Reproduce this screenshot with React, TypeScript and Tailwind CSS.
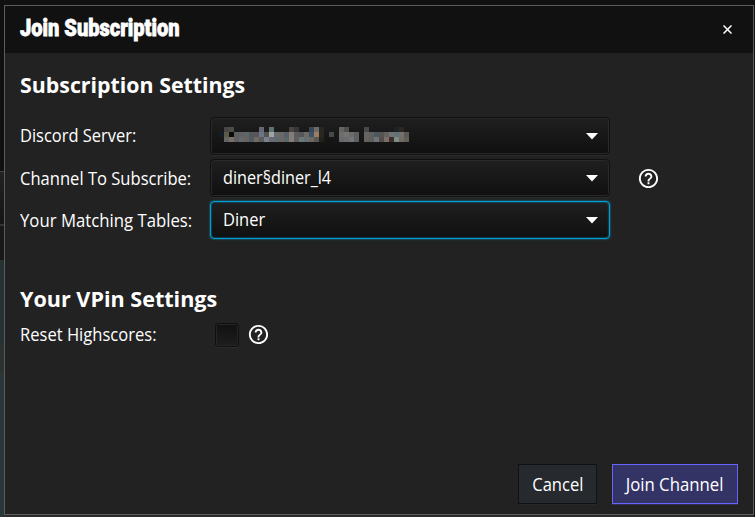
import React from "react";

const TOP = "- 464644 4e4c46 - - - - - 666a78 - 5e7270 - - - 484442 363638 - - 3c4654 6c6c6e 2a281e - - - 646464 54504e - - - 484848 - - - - - 1e2224 2c2624 -";
const MIDDLE = "161c2a 5e5a48 0a0a0a 5c5e60 626264 5e6668 54585a 5a5654 6c748c 56524c 9ea6a4 686c70 6c6864 56606a 827c7a 5c5a5a 545658 6e6a66 3c5468 9c7c62 2a281e - 464846 - 6e6e6e 747472 6a6c6a 5e5e5e - 686462 60605e 48585c 545252 64605e 727274 5e7476 74706c 5c5856";
const BOTTOM = "- 606464 7a6e66 5e5e60 64686a 66625e 505a62 706a64 5c5c5e 7a808e 6c6a72 5e6c72 6a6866 5c6668 847e7a 5e5e5c 6c7878 667072 6c6862 5a5652 24221a - - - 686a6a 6a6c74 767274 5a6060 - 666260 5e5e60 6c7476 544c4c 78706a 422e28 7e8c88 746a62 625e5a";
const cells = [TOP, MIDDLE, BOTTOM].join(" ").split(" ");

function Redacted() {
  return (
    <div className="-mt-1 -ml-1 grid w-[190px] grid-cols-[repeat(38,5px)] grid-rows-[5px_5px_5px]">
      {cells.map((c, i) => (
        <span key={i} style={{ background: c === "-" ? "transparent" : "#" + c }} />
      ))}
    </div>
  );
}

function Label({ children, className = "origin-left scale-x-[0.92]" }: { children: string; className?: string }) {
  return <span className={"block whitespace-nowrap " + className}>{children}</span>;
}

function Select({ children, focused = false }: { children: React.ReactNode; focused?: boolean }) {
  return (
    <div
      className={
        "flex h-[38px] w-[400px] items-center justify-between rounded-[4px] border bg-linear-to-b from-[#1f1f1f] to-[#101010] pr-[11px] pl-3 " +
        (focused
          ? "border-[#039ed3] shadow-[0_0_2px_#039ed3,inset_0_0_2px_#039ed3]"
          : "border-[#101010] shadow-[0_1px_0_#2c2c2c,inset_0_0_0_1px_#292929]")
      }
    >
      {children}
      <svg width="12" height="7" viewBox="0 0 12 7" fill="#fff">
        <path d="M0 0h12L6 6.5z" />
      </svg>
    </div>
  );
}

function Help() {
  return (
    <svg width="23" height="23" viewBox="0 0 24 24" fill="#fff" className="shrink-0">
      <path d="M11 18h2v-2h-2v2zm1-16C6.48 2 2 6.48 2 12s4.48 10 10 10 10-4.48 10-10S17.52 2 12 2zm0 18c-4.41 0-8-3.59-8-8s3.59-8 8-8 8 3.59 8 8-3.59 8-8 8zm0-14c-2.21 0-4 1.79-4 4h2c0-1.1.9-2 2-2s2 .9 2 2c0 2-3 1.75-3 5h2c0-2.25 3-2.5 3-5 0-2.21-1.79-4-4-4z" />
    </svg>
  );
}

export default function App() {
  return (
    <div className="flex h-[517px] w-[755px] overflow-hidden bg-[#111] font-['Open_Sans','Noto_Sans',sans-serif] text-[18px] leading-[26px] text-white">
      <div className="flex w-1 shrink-0 flex-col">
        <div className="h-[171px] bg-[#101010]" />
        <div className="h-[53px] border-t border-[#444] bg-linear-to-b from-[#222] to-[#151515]" />
        <div className="h-[36px] border-t-2 border-[#333] bg-[#181818]" />
        <div className="h-[84px] bg-[#263134]" />
        <div className="h-[30px] bg-[#2c332e]" />
        <div className="flex-1 bg-[#28373a]" />
      </div>
      <div className="mt-[5px] flex h-[510px] w-[750px] shrink-0 flex-col border border-[#5c5c5c] bg-[#222] shadow-[0_3px_0_#2c2c2c]">
        <header className="flex h-[47px] shrink-0 items-center justify-between bg-[#111] pr-[21px] pl-[15px]">
          <h1 className="origin-left scale-x-[0.835] pb-[3px] font-['Roboto'] text-[24px] font-black whitespace-nowrap [-webkit-text-stroke:0.8px_#fff]">
            Join Subscription
          </h1>
          <svg width="9" height="9" viewBox="0 0 9 9" stroke="#fff" strokeWidth="1.5">
            <path d="M.5.5l8 8M8.500.5l-8 8" />
          </svg>
        </header>
        <main className="flex flex-1 flex-col pl-[15px]">
          <h2 className="mt-[18px] text-[22px] font-bold">
            <Label className="origin-left scale-x-[0.97]">Subscription Settings</Label>
          </h2>
          <section className="mt-5 flex flex-col gap-1">
            <div className="flex items-center">
              <div className="w-[190px] pb-0.5"><Label className="origin-left scale-x-[0.914]">Discord Server:</Label></div>
              <Select><Redacted /></Select>
            </div>
            <div className="flex items-center">
              <div className="w-[190px]"><Label>Channel To Subscribe:</Label></div>
              <Select><Label className="origin-left scale-x-[0.9] pb-0.5">diner§diner_l4</Label></Select>
              <div className="ml-[27px]"><Help /></div>
            </div>
            <div className="flex items-center">
              <div className="w-[190px]"><Label className="origin-left scale-x-[0.93]">Your Matching Tables:</Label></div>
              <Select focused><Label className="origin-left scale-x-[0.915] pb-0.5">Diner</Label></Select>
            </div>
          </section>
          <h2 className="mt-[46px] text-[22px] font-bold">
            <Label className="origin-left scale-x-[0.98]">Your VPin Settings</Label>
          </h2>
          <div className="mt-[10px] flex items-center">
            <div className="w-[195px] pb-0.5"><Label>Reset Highscores:</Label></div>
            <div className="size-6 rounded-[3px] border border-[#101010] bg-linear-to-b from-[#111] to-[#1e1e1e] shadow-[0_1px_0_#2c2c2c,inset_0_0_0_1px_#252525]" />
            <div className="ml-[8px] pb-0.5"><Help /></div>
          </div>
          <footer className="mt-auto mr-[15px] mb-[10px] flex justify-end gap-[15px]">
            <button className="flex h-10 w-[79px] items-center justify-center border border-[#101113] bg-[#262a2e] shadow-[0_1px_0_#23292d]">
              <Label className="scale-x-[0.92]">Cancel</Label>
            </button>
            <button className="flex h-10 w-[126px] items-center justify-center border border-[#6666ff] bg-[#333366] shadow-[0_1px_0_#303050]">
              <Label className="scale-x-[0.93]">Join Channel</Label>
            </button>
          </footer>
        </main>
      </div>
    </div>
  );
}
